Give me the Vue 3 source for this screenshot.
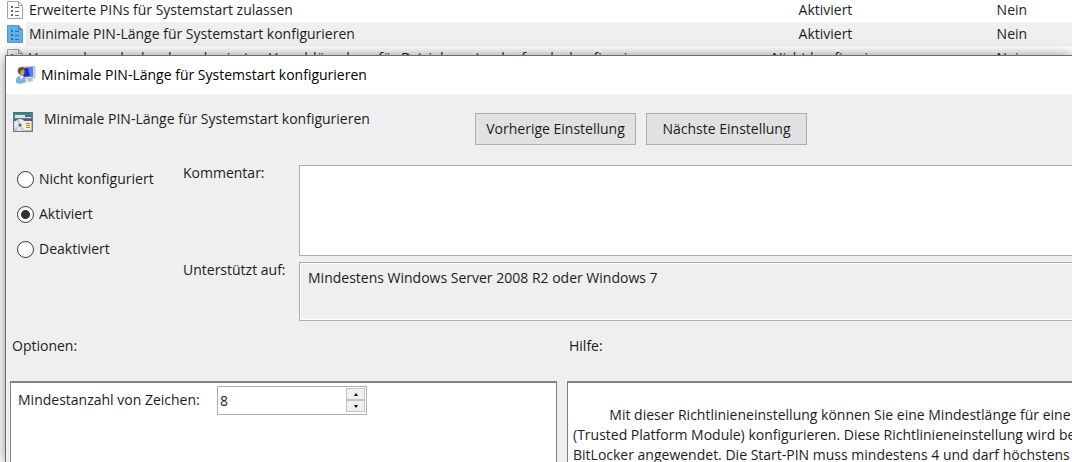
<script setup>
import { ref } from 'vue'

const policies = [
  { name: 'Erweiterte PINs für Systemstart zulassen', state: 'Aktiviert', comment: 'Nein' },
  { name: 'Minimale PIN-Länge für Systemstart konfigurieren', state: 'Aktiviert', comment: 'Nein', selected: true },
  { name: 'Verwendung der hardwarebasierten Verschlüsselung für Betriebssystemlaufwerke konfigurieren', state: 'Nicht konfiguri...', comment: 'Nein' }
]
const states = ['Nicht konfiguriert', 'Aktiviert', 'Deaktiviert']
const state = ref('Aktiviert')
const comment = ref('')
const minLength = ref(8)
const help = [
  '          Mit dieser Richtlinieneinstellung können Sie eine Mindestlänge für eine',
  '(Trusted Platform Module) konfigurieren. Diese Richtlinieneinstellung wird be',
  'BitLocker angewendet. Die Start-PIN muss mindestens 4 und darf höchstens 2'
].join('\n')
</script>

<template>
  <main class="screen">
    <table class="list">
      <tbody>
        <tr v-for="p in policies" :key="p.name" :class="{ selected: p.selected }">
          <td class="glyph">
            <svg width="16" height="18" viewBox="0 0 16 18" aria-hidden="true">
              <path d="M.5.5h11l4 4v13H.5z" :fill="p.selected ? '#62b0e6' : '#fafafa'" :stroke="p.selected ? '#4f9bd2' : '#a3a3a3'" />
              <path d="M11.5.5v4h4" fill="none" :stroke="p.selected ? '#3c88c2' : '#a3a3a3'" />
              <g :fill="p.selected ? '#2f6ea3' : '#666'">
                <path d="M4 5h2v2H4zM4 9h2v2H4zM4 13h2v2H4z" />
                <path d="M8 6h4v1H8zM8 10h4v1H8zM8 14h4v1H8z" />
              </g>
            </svg>
          </td>
          <td class="name">{{ p.name }}</td>
          <td class="state">{{ p.state }}</td>
          <td class="comment">{{ p.comment }}</td>
        </tr>
      </tbody>
    </table>

    <section class="dialog" role="dialog" aria-labelledby="title">
      <header class="titlebar">
        <svg width="20" height="18" viewBox="0 0 20 18" aria-hidden="true">
          <path d="M6 1l13-1v12L7 13z" fill="#d4d7da" stroke="#a6abb0" stroke-width=".6" />
          <path d="M7 2l10-.7v9L7 11z" fill="#1b2fc4" />
          <path d="M12 1.7l5-.4v9l-3 .3z" fill="#5a7cf0" />
          <path d="M11 13l5-1 1 3-5 1z" fill="#b9bdc0" />
          <path d="M0 15c0-4 2-5 5-5s5 2 5 6c-3 2-7 2-10 1z" fill="#7db3dc" />
          <path d="M4 10l1 4 3-4z" fill="#eef5fa" />
          <ellipse cx="5.5" cy="6" rx="3" ry="4" fill="#c89a78" />
          <path d="M2 7c-1-5 1-6 4-6 2 0 3 1 3 3-3-1-4 0-5 4z" fill="#66584c" />
        </svg>
        <h1 id="title">Minimale PIN-Länge für Systemstart konfigurieren</h1>
      </header>

      <div class="head">
        <div class="policy">
          <svg width="20" height="20" viewBox="0 0 20 20" aria-hidden="true">
            <path d="M0 0h20v20H0z" fill="#6b7981" />
            <path d="M0 0h20v2H0z" fill="#2d8580" />
            <path d="M2 3h16v3H2z" fill="#dfe2e8" />
            <path d="M12 3h6v2h-6z" fill="#5560a8" />
            <path d="M1 7h18v2H1z" fill="#4d5f78" />
            <path d="M1 9h18v10H1z" fill="#b4bdc0" />
            <circle cx="7" cy="13" r="6" fill="#e9ece9" />
            <path d="M7 13L3 9l3-2zM7 13l4 4-3 2z" fill="#b9d8c3" />
            <path d="M7 13l-5 3 2 2z" fill="#d9bee0" />
            <circle cx="7" cy="13" r="1.6" fill="#59636a" />
            <path d="M12 9h6v9h-7v-4h1z" fill="#fff1bd" />
            <path d="M13 11h4v1h-4zM13 13h4v1h-4zM13 15h4v1h-4z" fill="#9a835b" />
          </svg>
          <span>Minimale PIN-Länge für Systemstart konfigurieren</span>
        </div>
        <button type="button">Vorherige Einstellung</button>
        <button type="button">Nächste Einstellung</button>
      </div>

      <div class="settings">
        <div class="radios" role="radiogroup" aria-labelledby="title">
          <label v-for="s in states" :key="s">
            <input v-model="state" type="radio" name="state" :value="s" />
            <span>{{ s }}</span>
          </label>
        </div>
        <label class="caption" for="comment">Kommentar:</label>
        <textarea id="comment" v-model="comment"></textarea>
        <label class="caption" for="supported">Unterstützt auf:</label>
        <textarea id="supported" readonly value="Mindestens Windows Server 2008 R2 oder Windows 7"></textarea>
      </div>

      <div class="panes">
        <h2>Optionen:</h2>
        <h2>Hilfe:</h2>
        <div class="pane options">
          <label for="length">Mindestanzahl von Zeichen:</label>
          <div class="spinner">
            <input id="length" v-model="minLength" type="text" inputmode="numeric" />
            <div class="steps">
              <button type="button" aria-label="Erhöhen" @click="minLength++">
                <svg width="6" height="3" viewBox="0 0 6 3"><path d="M1 3l2-3 2 3z" /></svg>
              </button>
              <button type="button" aria-label="Verringern" @click="minLength--">
                <svg width="6" height="3" viewBox="0 0 6 3"><path d="M1 0l2 3 2-3z" /></svg>
              </button>
            </div>
          </div>
        </div>
        <p class="pane help">{{ help }}</p>
      </div>
    </section>
  </main>
</template>

<style>
body {
  margin: 0;
}
</style>

<style scoped>
* {
  box-sizing: border-box;
}
.screen {
  position: relative;
  height: 100vh;
  overflow: hidden;
  background: #fff;
  color: #1c1c1c;
  font: 14px/20px "Open Sans", "Noto Sans", sans-serif;
}
button,
input,
textarea {
  margin: 0;
  color: inherit;
  font: inherit;
}
h1,
h2,
p {
  margin: 0;
  font: inherit;
}
.list {
  width: 100%;
  margin-top: -2px;
  table-layout: fixed;
  border-collapse: collapse;
}
.list td {
  height: 24px;
  padding: 0;
  overflow: hidden;
  white-space: nowrap;
}
.list .glyph {
  width: 26px;
  padding-left: 7px;
}
.glyph svg {
  display: block;
}
.list .name {
  padding-left: 3px;
}
.list .state {
  width: 12%;
  text-align: center;
}
.list .comment {
  width: 17%;
  padding-left: 62px;
  text-align: center;
}
.selected td:not(.glyph) {
  background: #efefef;
}
.dialog {
  position: absolute;
  inset: 55px 0 0 5px;
  overflow: hidden;
  border: solid #6b6b6b;
  border-width: 1px 0 0 1px;
  background: #efefef;
  box-shadow: 0 0 12px rgba(0, 0, 0, 0.45);
}
.titlebar {
  display: flex;
  align-items: center;
  gap: 5px;
  height: 38px;
  padding-left: 10px;
  background: #fff;
  color: #000;
}
.head {
  display: flex;
  gap: 10px;
  padding: 19px 8px 20px 7px;
}
.policy {
  display: flex;
  gap: 11px;
  width: 452px;
}
.policy svg {
  margin-top: -1px;
}
.policy span {
  margin-top: -4px;
}
.head button {
  width: 161px;
  height: 32px;
  padding: 0;
  border: 1px solid #adadad;
  background: #e1e1e1;
}
.settings {
  display: grid;
  grid-template-columns: 166px 116px minmax(0, 1fr);
  grid-template-rows: 91px 59px;
  row-gap: 6px;
  padding-left: 11px;
}
.radios {
  display: flex;
  flex-direction: column;
  grid-row: span 2;
  gap: 15px;
  padding-top: 4px;
}
.radios label {
  display: flex;
  align-items: center;
  gap: 5px;
}
.radios input {
  width: 17px;
  height: 17px;
  border: 1px solid #333;
  border-radius: 50%;
  appearance: none;
  background: #fff;
}
.radios input:checked {
  background: radial-gradient(circle, #333 4px, #fff 5px);
}
.caption {
  margin-top: -2px;
}
textarea {
  display: block;
  width: 100%;
  height: 100%;
  padding: 5px 8px;
  border: 1px solid #abadb3;
  border-right: 0;
  border-radius: 0;
  resize: none;
  background: #fff;
}
textarea[readonly] {
  background: #efefef;
  box-shadow: inset 1px 1px #fff, inset 0 -1px #fff;
}
.panes {
  display: grid;
  grid-template-columns: minmax(0, 547fr) minmax(0, 505fr);
  grid-template-rows: 45px 160px;
  column-gap: 10px;
  padding: 15px 0 0 4px;
}
.panes h2 {
  padding-left: 2px;
}
.pane {
  border: 2px solid #828282;
  border-width: 2px 1px 2px 1px;
  background: #fff;
}
.options {
  display: flex;
  align-items: flex-start;
  justify-content: flex-start;
  padding: 3px 7px;
}
.options > label {
  width: 199px;
  padding-top: 4px;
}
.spinner {
  display: flex;
  width: 150px;
  height: 29px;
  padding: 1px;
  border: 1px solid #abadb3;
  background: #fff;
}
.spinner input {
  flex: 1;
  min-width: 0;
  padding: 0 1px;
  border: 0;
  background: none;
}
.steps {
  display: flex;
  flex-direction: column;
  width: 19px;
  height: 24px;
}
.steps button {
  display: flex;
  flex: 1;
  align-items: center;
  justify-content: center;
  padding: 0;
  border: 1px solid #c4c4c4;
  background: #efefef;
}
.help {
  padding: 22px 0 0 5px;
  overflow: hidden;
  border-right: 0;
  white-space: pre;
}
</style>
